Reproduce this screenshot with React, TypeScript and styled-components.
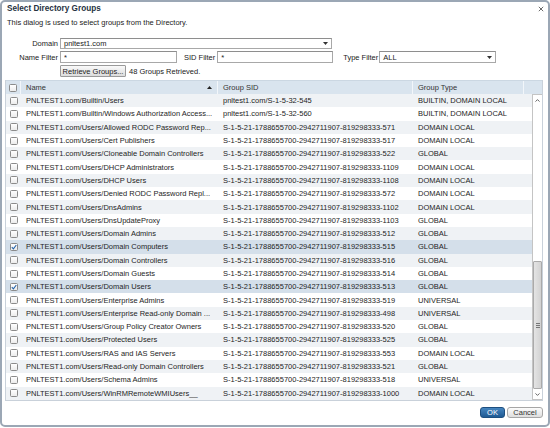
import * as React from 'react';
import styled, { createGlobalStyle, css } from 'styled-components';

interface Group {
    name: string;
    sid: string;
    type: string;
    checked?: boolean;
}

const SID = 'S-1-5-21-1788655700-2942711907-819298333-';
const DOM = 'PNLTEST1.com/Users/';

const groups: Group[] = [
    { name: 'PNLTEST1.com/Builtin/Users', sid: 'pnltest1.com/S-1-5-32-545', type: 'BUILTIN, DOMAIN LOCAL' },
    { name: 'PNLTEST1.com/Builtin/Windows Authorization Access...', sid: 'pnltest1.com/S-1-5-32-560', type: 'BUILTIN, DOMAIN LOCAL' },
    { name: DOM + 'Allowed RODC Password Rep...', sid: SID + '571', type: 'DOMAIN LOCAL' },
    { name: DOM + 'Cert Publishers', sid: SID + '517', type: 'DOMAIN LOCAL' },
    { name: DOM + 'Cloneable Domain Controllers', sid: SID + '522', type: 'GLOBAL' },
    { name: DOM + 'DHCP Administrators', sid: SID + '1109', type: 'DOMAIN LOCAL' },
    { name: DOM + 'DHCP Users', sid: SID + '1108', type: 'DOMAIN LOCAL' },
    { name: DOM + 'Denied RODC Password Repl...', sid: SID + '572', type: 'DOMAIN LOCAL' },
    { name: DOM + 'DnsAdmins', sid: SID + '1102', type: 'DOMAIN LOCAL' },
    { name: DOM + 'DnsUpdateProxy', sid: SID + '1103', type: 'GLOBAL' },
    { name: DOM + 'Domain Admins', sid: SID + '512', type: 'GLOBAL' },
    { name: DOM + 'Domain Computers', sid: SID + '515', type: 'GLOBAL', checked: true },
    { name: DOM + 'Domain Controllers', sid: SID + '516', type: 'GLOBAL' },
    { name: DOM + 'Domain Guests', sid: SID + '514', type: 'GLOBAL' },
    { name: DOM + 'Domain Users', sid: SID + '513', type: 'GLOBAL', checked: true },
    { name: DOM + 'Enterprise Admins', sid: SID + '519', type: 'UNIVERSAL' },
    { name: DOM + 'Enterprise Read-only Domain ...', sid: SID + '498', type: 'UNIVERSAL' },
    { name: DOM + 'Group Policy Creator Owners', sid: SID + '520', type: 'GLOBAL' },
    { name: DOM + 'Protected Users', sid: SID + '525', type: 'GLOBAL' },
    { name: DOM + 'RAS and IAS Servers', sid: SID + '553', type: 'DOMAIN LOCAL' },
    { name: DOM + 'Read-only Domain Controllers', sid: SID + '521', type: 'GLOBAL' },
    { name: DOM + 'Schema Admins', sid: SID + '518', type: 'UNIVERSAL' },
    { name: DOM + 'WinRMRemoteWMIUsers__', sid: SID + '1000', type: 'DOMAIN LOCAL' },
];

const Caret = () => (
    <svg width="5" height="3" viewBox="0 0 5 3">
        <path d="M0 0 L5 0 L2.5 3 Z" fill="#333" />
    </svg>
);

const Check = () => (
    <svg width="6" height="6" viewBox="0 0 6 6">
        <path d="M0.8 3.2 L2.4 4.8 L5.3 1" stroke="#2766ad" strokeWidth="1.1" fill="none" />
    </svg>
);

export default function App() {
    return (
        <>
            <GlobalStyle />
            <Dialog>
                <TitleBar>
                    <Title>Select Directory Groups</Title>
                    <CloseButton>
                        <svg width="6" height="6" viewBox="0 0 6 6">
                            <path d="M0.8 0.8 L5.2 5.2 M5.2 0.8 L0.8 5.2" stroke="#6a6a6a" strokeWidth="1" />
                        </svg>
                    </CloseButton>
                </TitleBar>
                <Description>This dialog is used to select groups from the Directory.</Description>

                <Form>
                    <FormRow $height={11}>
                        <Label $width={53}>Domain</Label>
                        <SelectBox $width={272}>
                            <span>pnltest1.com</span>
                            <Caret />
                        </SelectBox>
                    </FormRow>
                    <FormRow $height={12}>
                        <Label $width={53}>Name Filter</Label>
                        <TextInput $width={117} defaultValue="*" />
                        <Label $gapLeft={7}>SID Filter</Label>
                        <TextInput $width={116} defaultValue="*" />
                        <Label $gapLeft={10} $gapRight={1}>Type Filter</Label>
                        <SelectBox $width={117}>
                            <span>ALL</span>
                            <Caret />
                        </SelectBox>
                    </FormRow>
                    <FormRow $height={12} $indent={55}>
                        <RetrieveButton>Retrieve Groups...</RetrieveButton>
                        <Status>48 Groups Retrieved.</Status>
                    </FormRow>
                </Form>

                <Table>
                    <HeaderRow>
                        <HeaderCell $center>
                            <CheckBox />
                        </HeaderCell>
                        <HeaderCell>
                            <span>Name</span>
                            <svg width="5" height="3" viewBox="0 0 5 3">
                                <path d="M0 3 L5 3 L2.5 0 Z" fill="#222" />
                            </svg>
                        </HeaderCell>
                        <HeaderCell>Group SID</HeaderCell>
                        <HeaderCell>Group Type</HeaderCell>
                        <HeaderCell $last />
                    </HeaderRow>
                    <Body>
                        <Rows>
                            {groups.map((g, i) => (
                                <Row key={g.name} $odd={i % 2 === 0} $selected={!!g.checked}>
                                    <Cell $center>
                                        <CheckBox>{g.checked && <Check />}</CheckBox>
                                    </Cell>
                                    <Cell>{g.name}</Cell>
                                    <Cell>{g.sid}</Cell>
                                    <Cell>{g.type}</Cell>
                                </Row>
                            ))}
                        </Rows>
                        <ScrollBar>
                            <ScrollArrow>
                                <svg width="5" height="3" viewBox="0 0 5 3">
                                    <path d="M0.5 2.6 L2.5 0.6 L4.5 2.6" stroke="#555" strokeWidth="0.9" fill="none" />
                                </svg>
                            </ScrollArrow>
                            <ScrollSpace />
                            <Thumb>
                                <Grip />
                            </Thumb>
                            <ScrollArrow>
                                <svg width="5" height="3" viewBox="0 0 5 3">
                                    <path d="M0.5 0.4 L2.5 2.4 L4.5 0.4" stroke="#555" strokeWidth="0.9" fill="none" />
                                </svg>
                            </ScrollArrow>
                        </ScrollBar>
                    </Body>
                </Table>

                <Footer>
                    <OkButton>OK</OkButton>
                    <CancelButton>Cancel</CancelButton>
                </Footer>
            </Dialog>
        </>
    );
}

const GlobalStyle = createGlobalStyle`
    html, body {
        margin: 0;
        padding: 0;
        background: #fff;
    }
    body {
        font-family: "Liberation Sans", Arial, sans-serif;
        font-size: 7.5px;
        color: #222;
    }
    * {
        box-sizing: border-box;
    }
`;

const Dialog = styled.div`
    width: 550px;
    height: 427px;
    border: 2px solid #9ba7b5;
    border-radius: 5px;
    padding: 0 5px 0 3px;
    display: flex;
    flex-direction: column;
    background: #fff;
`;

const TitleBar = styled.div`
    display: flex;
    justify-content: space-between;
    align-items: center;
    padding-top: 2px;
    height: 12px;
`;

const Title = styled.div`
    font-size: 8.2px;
    font-weight: bold;
    color: #26323f;
    padding-left: 2px;
    line-height: 10px;
`;

const CloseButton = styled.div`
    width: 6px;
    height: 6px;
    display: flex;
    margin-right: -1px;
    margin-top: -1px;
`;

const Description = styled.div`
    margin-top: 4px;
    padding-left: 2px;
    line-height: 10px;
    color: #222;
`;

const Form = styled.div`
    margin-top: 10px;
    display: flex;
    flex-direction: column;
    gap: 2px;
`;

const FormRow = styled.div<{ $height: number; $indent?: number }>`
    display: flex;
    align-items: center;
    height: ${p => p.$height}px;
    padding-left: ${p => p.$indent || 0}px;
`;

const Label = styled.label<{ $width?: number; $gapLeft?: number; $gapRight?: number }>`
    ${p => p.$width && css`width: ${p.$width}px;`}
    text-align: right;
    margin-left: ${p => p.$gapLeft || 0}px;
    margin-right: ${p => (p.$gapRight !== undefined ? p.$gapRight : 2)}px;
    color: #222;
    white-space: nowrap;
`;

const fieldBox = css`
    height: 100%;
    border: 1px solid #a8a8a8;
    border-top-color: #8e8e8e;
    background: #fff;
    font-family: "Liberation Sans", Arial, sans-serif;
    font-size: 7.5px;
    color: #222;
    padding: 0 3px;
`;

const TextInput = styled.input<{ $width: number }>`
    ${fieldBox}
    width: ${p => p.$width}px;
    margin: 0;
    outline: none;
`;

const SelectBox = styled.div<{ $width: number }>`
    ${fieldBox}
    width: ${p => p.$width}px;
    display: flex;
    align-items: center;
    justify-content: space-between;
    padding-right: 3px;
`;

const RetrieveButton = styled.div`
    width: 66px;
    height: 100%;
    border: 1px solid #9a9a9a;
    border-radius: 1px;
    background: linear-gradient(#fafafa, #dcdcdc);
    display: flex;
    align-items: center;
    justify-content: center;
    color: #222;
`;

const Status = styled.span`
    margin-left: 3px;
`;

const Table = styled.div`
    margin-top: 3px;
    border: 1px solid #c9d1da;
    border-top: none;
    display: flex;
    flex-direction: column;
`;

const HeaderRow = styled.div`
    display: grid;
    grid-template-columns: 15px 197px 195px 111px 1fr;
    height: 14px;
    background: #d9e4ee;
    border-top: 1px solid #cbd7e2;
`;

const HeaderCell = styled.div<{ $center?: boolean; $last?: boolean }>`
    display: flex;
    align-items: center;
    justify-content: ${p => (p.$center ? 'center' : 'space-between')};
    padding: ${p => (p.$center ? '0' : '0 5px 0 5px')};
    border-right: ${p => (p.$last ? 'none' : '1px solid #f2f6fa')};
    color: #333;
    white-space: nowrap;
`;

const Body = styled.div`
    display: flex;
    height: 306px;
`;

const Rows = styled.div`
    flex: 1;
    display: flex;
    flex-direction: column;
`;

const Row = styled.div<{ $odd: boolean; $selected: boolean }>`
    display: grid;
    grid-template-columns: 15px 197px 195px 1fr;
    height: 13.3px;
    align-items: center;
    background: ${p => (p.$selected ? '#d4dfea' : p.$odd ? '#eff2f5' : '#fff')};
`;

const Cell = styled.div<{ $center?: boolean }>`
    display: flex;
    align-items: center;
    justify-content: ${p => (p.$center ? 'center' : 'flex-start')};
    padding-left: ${p => (p.$center ? 0 : 5)}px;
    white-space: nowrap;
    overflow: hidden;
    color: #1e1e1e;
`;

const CheckBox = styled.span`
    width: 8px;
    height: 8px;
    border: 1px solid #8b8b8b;
    border-radius: 1.5px;
    background: linear-gradient(#fff, #ececec);
    display: flex;
    align-items: center;
    justify-content: center;
`;

const ScrollBar = styled.div`
    width: 10px;
    border: 1px solid #c4c4c4;
    border-right: none;
    background: #fff;
    display: flex;
    flex-direction: column;
`;

const ScrollArrow = styled.div`
    height: 10px;
    display: flex;
    align-items: center;
    justify-content: center;
`;

const ScrollSpace = styled.div`
    flex: 1;
`;

const Thumb = styled.div`
    height: 128px;
    border: 1px solid #aaaaaa;
    border-radius: 1px;
    background: linear-gradient(to right, #e4e4e4, #d2d2d2);
    display: flex;
    align-items: center;
    justify-content: center;
`;

const Grip = styled.div`
    width: 4px;
    height: 5px;
    background: repeating-linear-gradient(#777 0 1px, transparent 1px 2px);
`;

const Footer = styled.div`
    margin-top: 6px;
    display: flex;
    justify-content: flex-end;
    gap: 2px;
    height: 11px;
`;

const buttonBase = css`
    height: 11px;
    border-radius: 3px;
    display: flex;
    align-items: center;
    justify-content: center;
    font-size: 7.5px;
`;

const OkButton = styled.div`
    ${buttonBase}
    width: 25px;
    border: 1px solid #1d4f80;
    background: linear-gradient(#4585bf, #1f5a93);
    color: #fff;
`;

const CancelButton = styled.div`
    ${buttonBase}
    width: 36px;
    border: 1px solid #a6a6a6;
    background: linear-gradient(#fcfcfc, #dedede);
    color: #333;
`;
